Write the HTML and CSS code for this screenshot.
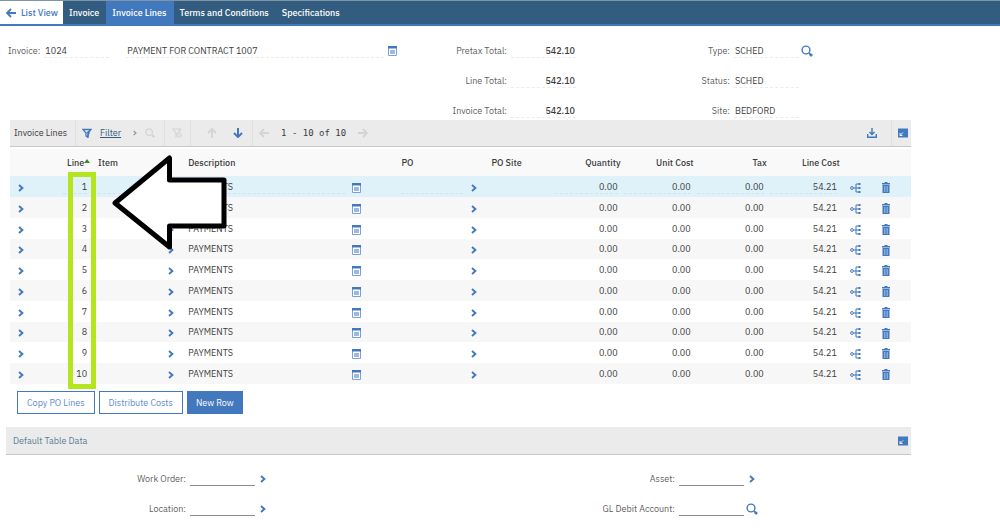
FILE: index.html
```
<!DOCTYPE html>
<html lang="en">
<head>
<meta charset="utf-8">
<title>Invoice Lines</title>
<link rel="stylesheet" href="styles.css">
</head>
<body>
<svg class="sprite" aria-hidden="true">
  <symbol id="chevron" viewBox="0 0 6 8"><path d="M1 1l3.400 3L1 7" fill="none" stroke="currentColor" stroke-width="1.900"/></symbol>
  <symbol id="left" viewBox="0 0 10 10"><path d="M10 5H1.500M5 1L1 5l4 4" fill="none" stroke="currentColor" stroke-width="1.800"/></symbol>
  <symbol id="right" viewBox="0 0 10 10"><path d="M0 5h8.500M5 1l4 4-4 4" fill="none" stroke="currentColor" stroke-width="1.800"/></symbol>
  <symbol id="up" viewBox="0 0 10 10"><path d="M5 10V1.500M1 5l4-4 4 4" fill="none" stroke="currentColor" stroke-width="1.800"/></symbol>
  <symbol id="down" viewBox="0 0 10 10"><path d="M5 0v8.500M1 5l4 4 4-4" fill="none" stroke="currentColor" stroke-width="2"/></symbol>
  <symbol id="search" viewBox="0 0 12 12"><circle cx="5" cy="5" r="3.900" fill="none" stroke="currentColor" stroke-width="1.400"/><path d="M8 8l1.200 1.200" stroke="currentColor" stroke-width="1.200"/><path d="M8.800 8.800l2.200 2.200" stroke="currentColor" stroke-width="2.600"/></symbol>
  <symbol id="detail" viewBox="0 0 9 10"><path d="M.5.5h8v9h-8z" fill="#fff" stroke="#7ba0d6"/><path d="M0 0h9v2.500H0z" fill="#4178be"/><path d="M2 4h5v4H2z" fill="#9db9e2"/></symbol>
  <symbol id="filter" viewBox="0 0 10 10"><path d="M1 1.500h8L6 5.200V9.500L4 8V5.200z" fill="none" stroke="currentColor" stroke-width="1.300"/><path d="M8.500 2L5.500 4.500l1.500.5-1.500 4" fill="none" stroke="currentColor" stroke-width="1.400"/></symbol>
  <symbol id="nofilter" viewBox="0 0 10 10"><path d="M9 1H1l3 4v4.500M9 1L6.500 4" fill="none" stroke="currentColor" stroke-width="1.200"/><circle cx="7" cy="7" r="2.300" fill="none" stroke="currentColor"/><path d="M5.500 5.500l3 3" stroke="currentColor"/></symbol>
  <symbol id="download" viewBox="0 0 10 10"><path d="M5 0v6M2.500 4L5 6.500 7.500 4M.7 6v3.200h8.600V6" fill="none" stroke="currentColor" stroke-width="1.400"/></symbol>
  <symbol id="collapse" viewBox="0 0 10 9"><path d="M0 0h10v9H0z" fill="#4178be"/><path d="M5 4L2 7M2 4.500V7h2.500" fill="none" stroke="#fff" stroke-width=".9"/></symbol>
  <symbol id="tree" viewBox="0 0 11 10"><circle cx="2" cy="5" r="1.400" fill="none" stroke="currentColor"/><path d="M3.500 5H9M9 1H6v8h3" fill="none" stroke="currentColor"/><path d="M8.500 0h2v2h-2zM8.500 4h2v2h-2zM8.500 8h2v2h-2z" fill="currentColor"/></symbol>
  <symbol id="trash" viewBox="0 0 8 11"><path d="M0 1h2.500V0h3v1H8v1.500H0zM.5 3h7v8h-7z" fill="currentColor"/><path d="M2.500 4v6M4 4v6M5.500 4v6" stroke="#b9cdea" stroke-width=".6"/></symbol>
</svg>

<nav class="tabs">
  <a class="tab back" href="#"><svg class="i10"><use href="#left"/></svg>List View</a>
  <a class="tab" href="#">Invoice</a>
  <a class="tab active" href="#">Invoice Lines</a>
  <a class="tab" href="#">Terms and Conditions</a>
  <a class="tab" href="#">Specifications</a>
</nav>

<form class="summary">
  <div class="summary-main">
    <label for="invoice">Invoice:</label>
    <input class="field" id="invoice" value="1024" readonly>
    <input class="field grow" aria-label="Invoice description" value="PAYMENT FOR CONTRACT 1007" readonly>
    <button class="icon" type="button" aria-label="Long description"><svg class="i9"><use href="#detail"/></svg></button>
  </div>
  <div class="stack totals">
    <div class="pair"><label for="pretax">Pretax Total:</label><input class="field num" id="pretax" value="542.10" readonly></div>
    <div class="pair"><label for="linetotal">Line Total:</label><input class="field num" id="linetotal" value="542.10" readonly></div>
    <div class="pair"><label for="invtotal">Invoice Total:</label><input class="field num" id="invtotal" value="542.10" readonly></div>
  </div>
  <div class="stack status">
    <div class="pair"><label for="type">Type:</label><input class="field" id="type" value="SCHED" readonly><button class="icon lookup" type="button" aria-label="Select type"><svg class="i12"><use href="#search"/></svg></button></div>
    <div class="pair"><label for="status">Status:</label><input class="field" id="status" value="SCHED" readonly></div>
    <div class="pair"><label for="site">Site:</label><input class="field" id="site" value="BEDFORD" readonly></div>
  </div>
</form>

<section class="lines">
  <div class="bar">
    <h2 class="bar-title">Invoice Lines</h2>
    <div class="tools filter-tools">
      <svg class="i10 accent"><use href="#filter"/></svg>
      <a class="filter" href="#">Filter</a>
      <svg class="small-chev"><use href="#chevron"/></svg>
      <button class="icon" type="button" aria-label="Find" disabled><svg class="i10"><use href="#search"/></svg></button>
    </div>
    <div class="tools clear-tools"><button class="icon" type="button" aria-label="Clear filter" disabled><svg class="i10"><use href="#nofilter"/></svg></button></div>
    <div class="tools move-tools">
      <button class="icon" type="button" aria-label="Previous row" disabled><svg class="i10"><use href="#up"/></svg></button>
      <button class="icon" type="button" aria-label="Next row"><svg class="i10"><use href="#down"/></svg></button>
    </div>
    <div class="tools page-tools">
      <button class="icon" type="button" aria-label="Previous page" disabled><svg class="i10"><use href="#left"/></svg></button>
      <span class="range">1 - 10 of 10</span>
      <button class="icon" type="button" aria-label="Next page" disabled><svg class="i10"><use href="#right"/></svg></button>
    </div>
    <button class="icon download" type="button" aria-label="Download"><svg class="i10"><use href="#download"/></svg></button>
    <div class="tools end-tools"><button class="icon" type="button" aria-label="Collapse invoice lines"><svg class="i10"><use href="#collapse"/></svg></button></div>
  </div>

  <table class="grid">
    <colgroup>
      <col class="c-open"><col class="c-line"><col class="c-ref"><col class="c-go"><col class="c-desc"><col class="c-open"><col class="c-ref"><col class="c-go"><col class="c-site"><col class="c-qty"><col class="c-num"><col class="c-num"><col class="c-num"><col class="c-tree"><col class="c-del">
    </colgroup>
    <thead>
      <tr><th></th><th class="sorted">Line<svg class="sort" viewBox="0 0 6 4"><path d="M0 4l3-4 3 4z" fill="#3c8a2e"/></svg></th><th>Item</th><th></th><th>Description</th><th></th><th>PO</th><th></th><th>PO Site</th><th class="r">Quantity</th><th class="r">Unit Cost</th><th class="r">Tax</th><th class="r">Line Cost</th><th></th><th></th></tr>
    </thead>
    <tbody id="rows"></tbody>
  </table>

  <div class="highlight"></div>
  <svg class="pointer" viewBox="0 0 116 96" aria-hidden="true"><path d="M4 48L58.500 3v22H113v46H58.500v21z" fill="#fff" stroke="#000" stroke-width="5" stroke-linejoin="round"/></svg>
</section>

<div class="actions">
  <button class="btn" type="button">Copy PO Lines</button>
  <button class="btn" type="button">Distribute Costs</button>
  <button class="btn primary" type="button">New Row</button>
</div>

<section class="defaults">
  <div class="bar">
    <h2 class="bar-title link">Default Table Data</h2>
    <div class="end-tools plain"><button class="icon" type="button" aria-label="Collapse default table data"><svg class="i10"><use href="#collapse"/></svg></button></div>
  </div>
  <form class="defaults-form">
    <div class="stack">
      <div class="pair"><label for="wo">Work Order:</label><input class="field edit" id="wo"><button class="icon go" type="button" aria-label="Work order menu"><svg class="chev"><use href="#chevron"/></svg></button></div>
      <div class="pair"><label for="loc">Location:</label><input class="field edit" id="loc"><button class="icon go" type="button" aria-label="Location menu"><svg class="chev"><use href="#chevron"/></svg></button></div>
    </div>
    <div class="stack">
      <div class="pair"><label for="asset">Asset:</label><input class="field edit" id="asset"><button class="icon go" type="button" aria-label="Asset menu"><svg class="chev"><use href="#chevron"/></svg></button></div>
      <div class="pair"><label for="gl">GL Debit Account:</label><input class="field edit" id="gl"><button class="icon lookup" type="button" aria-label="Select GL debit account"><svg class="i12"><use href="#search"/></svg></button></div>
    </div>
  </form>
</section>
<script src="app.js"></script>
</body>
</html>
```
FILE: app.js
```
const lines = Array.from({ length: 10 }, (_, i) => ({
  line: String(i + 1), description: "PAYMENTS", quantity: "0.00", unitCost: "0.00", tax: "0.00", lineCost: "54.21"
}));

const icon = (id, cls, label) =>
  `<td><button class="icon" type="button" aria-label="${label}"><svg class="${cls}"><use href="#${id}"/></svg></button></td>`;

// The selected row shows its values in fields, the others as text.
const cell = (value, label, selected, cls = "") =>
  `<td class="${cls}">${selected ? `<input class="cell" aria-label="${label}" value="${value}" readonly>` : value}</td>`;

document.getElementById("rows").innerHTML = lines.map((l, i) => {
  const s = i === 0;
  return `<tr class="${s ? "selected" : ""}">` +
    icon("chevron", "chev", "View details") +
    cell(l.line, "Line", s, "line") +
    cell("", "Item", s) + icon("chevron", "chev", "Item menu") +
    cell(l.description, "Description", s) + icon("detail", "i9", "Long description") +
    cell("", "PO", s) + icon("chevron", "chev", "PO menu") +
    "<td></td>" +
    cell(l.quantity, "Quantity", s, "r") + cell(l.unitCost, "Unit Cost", s, "r") +
    cell(l.tax, "Tax", s, "r") + cell(l.lineCost, "Line Cost", s, "r") +
    icon("tree", "i11", "Distribute costs") + icon("trash", "bin", "Delete row") + "</tr>";
}).join("");
```
FILE: styles.css
```
* { box-sizing: border-box; }

body {
  margin: 0;
  background: #fff;
  color: #3c3c3c;
  font: 9px/12px "IBM Plex Sans", "Open Sans", "Noto Sans", sans-serif;
}

.sprite { display: none; }
svg { display: block; flex: none; }
input, button { font: inherit; color: inherit; }
input { min-width: 0; }
label { color: #5f5f5f; white-space: nowrap; }

.i9 { width: 9px; height: 10px; }
.i10 { width: 10px; height: 10px; }
.i11 { width: 11px; height: 10px; }
.i12 { width: 12px; height: 12px; }
.chev { width: 6px; height: 8px; }
.small-chev { width: 4px; height: 6px; color: #999; }
.bin { width: 8px; height: 11px; }
.accent { color: #4178be; }

.icon {
  display: block;
  flex: none;
  padding: 0;
  border: 0;
  background: none;
  color: #4178be;
}
.icon:disabled { color: #d4d4d4; }

.tabs {
  display: flex;
  height: 26px;
  background: #325c80;
  border-top: 1px solid #7d95a5;
  border-bottom: 2px solid #4178be;
}
.tab {
  display: flex;
  align-items: center;
  padding: 0 6px;
  color: #fff;
  font-weight: 500;
  text-decoration: none;
}
.tab + .tab { padding-right: 7px; }
.tab.active { background: #4178be; }
.tab.back { gap: 5px; padding-right: 5px; background: #fff; color: #4178be; }

.field {
  width: 65px;
  height: 14px;
  padding: 0 1px;
  border: 0;
  border-bottom: 1px dashed #ebebeb;
  background: none;
  outline: 0;
}
.field.grow { flex: 1; }
.field.num { text-align: right; font-weight: 500; }
.field.edit { border-bottom: 1px solid #8c8c8c; }

.pair { display: flex; align-items: center; gap: 4px; height: 18px; }
.stack { display: flex; flex-direction: column; gap: 12px; }

.summary {
  display: grid;
  grid-template-columns: 389fr 179fr 335fr;
  padding: 16px 89px 0 8px;
}
.summary-main { display: flex; align-items: center; gap: 4px; height: 18px; }
.summary-main .grow { margin-left: 13px; }
.totals .pair { justify-content: flex-end; }
.status label { width: 154px; text-align: right; }
.lookup { margin-left: -2px; }
.go { margin-left: 1px; }

.lines { position: relative; margin: 0 89px 0 10px; }

.bar {
  display: flex;
  align-items: center;
  height: 27px;
  background: #ebebeb;
  border-bottom: 1px solid #c8c8c8;
}
.bar-title { margin: 0; padding: 0 8px 0 4px; font-size: 9px; font-weight: 400; }
.bar-title.link { padding-left: 7px; color: #5a7f95; }
.tools {
  display: flex;
  align-items: center;
  height: 100%;
  padding: 0 6px;
  border-left: 1px solid #e0e0e0;
}
.filter-tools { gap: 8px; padding-right: 9px; }
.filter { margin-right: 4px; color: #325c80; }
.clear-tools { padding: 0 8px 0 7px; }
.move-tools { gap: 16px; padding: 0 9px 0 16px; }
.page-tools { gap: 12px; }
.range { font: 9px/12px "DejaVu Sans Mono", monospace; }
.download { margin-left: auto; margin-right: 14px; }
.end-tools { padding: 0 3px 0 6px; }
.end-tools.plain { margin-left: auto; }

.grid {
  width: 100%;
  margin-top: 2px;
  border-collapse: collapse;
  table-layout: fixed;
}
.c-open { width: 50px; }
.c-line { width: 35px; }
.c-ref { width: 68px; }
.c-go { width: 22px; }
.c-desc { width: 163px; }
.c-site { width: 63px; }
.c-qty { width: 69px; }
.c-num { width: 73px; }
.c-tree { width: 30px; }
.c-del { width: 41px; }

th { height: 27px; padding: 0 3px; background: #f9f9f9; font-weight: 500; text-align: left; white-space: nowrap; }
th.r { padding-right: 0; }
th.sorted { padding: 0 5px 0 7px; }
.sort { display: inline-block; width: 6px; height: 4px; vertical-align: 3px; }
td { height: 21px; padding: 0 3px; }
tr:nth-child(4n) td { height: 20px; }
tbody tr:nth-child(even) { background: #f7f7f7; }
tbody .selected { background: #dff2f9; }
td .icon { margin: 2px 0 0 5px; }
td:nth-child(4) .icon, td:nth-child(8) .icon { margin-left: 2px; }
td:nth-child(6) .icon { margin-left: 1px; }
td:nth-child(14) .icon { margin-left: 7px; }
td:nth-child(15) .icon { margin-left: 9px; }
.r { text-align: right; }
.line { padding-right: 8px; text-align: right; }
.cell {
  display: block;
  width: 100%;
  height: 14px;
  padding: 0;
  border: 0;
  border-bottom: 1px dashed #d3e4ea;
  background: none;
  outline: 0;
  text-align: inherit;
}

.highlight {
  position: absolute;
  top: 52px;
  left: 58px;
  width: 28px;
  height: 217px;
  border: 5px solid #b5e61d;
}
.pointer {
  position: absolute;
  top: 35px;
  left: 101px;
  width: 116px;
  height: 96px;
}

.actions { display: flex; gap: 4px; padding: 7px 17px 13px; }
.btn {
  height: 23px;
  padding: 0 9px;
  border: 1px solid #4178be;
  background: #fff;
  color: #5c8ccc;
}
.btn.primary { padding: 0 8px; background: #4178be; color: #fff; }

.defaults { margin: 0 89px 0 6px; }
.defaults .bar { height: 28px; }
.defaults-form { display: grid; grid-template-columns: 489fr 416fr; padding-top: 15px; }
.defaults-form label { width: 180px; text-align: right; }
```
